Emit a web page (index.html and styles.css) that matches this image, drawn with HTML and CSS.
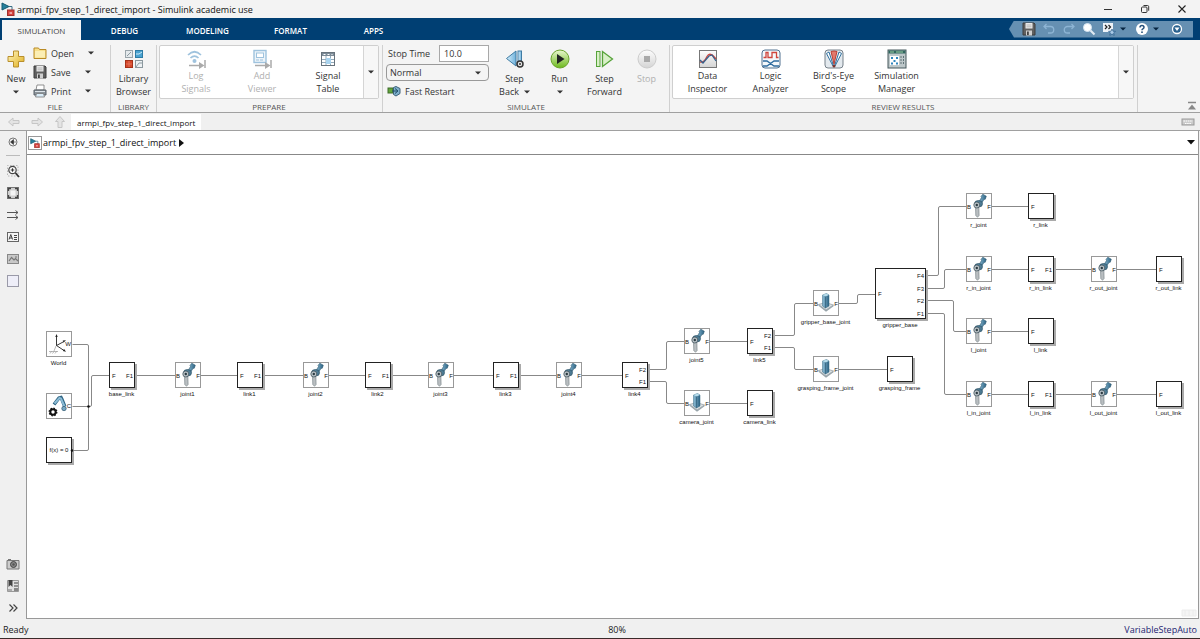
FILE: index.html
```html
<!DOCTYPE html>
<html lang="en">
<head>
<meta charset="utf-8">
<title>armpi_fpv_step_1_direct_import - Simulink academic use</title>
<link rel="stylesheet" href="styles.css">
</head>
<body>
<svg class="defs" aria-hidden="true">
  <defs>
    <linearGradient id="gold" x1="0" y1="0" x2="1" y2="1"><stop offset="0" stop-color="#fff7c0"/><stop offset="1" stop-color="#e0ae1c"/></linearGradient>
    <linearGradient id="green" x1="0" y1="0" x2="0" y2="1"><stop offset="0" stop-color="#eaf7cf"/><stop offset="1" stop-color="#6cb81c"/></linearGradient>
    <linearGradient id="blue" x1="0" y1="0" x2="1" y2="0"><stop offset="0" stop-color="#d8effb"/><stop offset="1" stop-color="#6fb2dc"/></linearGradient>
    <linearGradient id="steel" x1="0" y1="0" x2="1" y2="0"><stop offset="0" stop-color="#8dbdd6"/><stop offset="1" stop-color="#2b6283"/></linearGradient>
    <linearGradient id="grey" x1="0" y1="0" x2="0" y2="1"><stop offset="0" stop-color="#fdfdfd"/><stop offset="1" stop-color="#d4d4d4"/></linearGradient>
    <symbol id="i-model" viewBox="0 0 14 14"><path d="M1 1l7 3.500-7 3.500z" fill="#27809c" stroke="#155a70"/><path d="M8 4.500h3v4" fill="none" stroke="#3a6f86"/><rect x="6.500" y="8" width="6.500" height="5.500" fill="#d8433e" stroke="#a12f2b"/><path d="M8.500 11h2.500" stroke="#fff"/></symbol>
    <symbol id="i-floppy" viewBox="0 0 14 14"><path d="M1 1h11l1 1v11H1z" fill="#606060" stroke="#3d3d3d"/><rect x="3.500" y="1" width="7" height="5.500" fill="#e9e9e9"/><path d="M4.500 3h5M4.500 4.800h5" stroke="#a5a5a5" stroke-width=".7"/><rect x="4" y="8.500" width="6" height="5" fill="#cfcfcf"/><rect x="5" y="9.500" width="1.800" height="3.500" fill="#444"/></symbol>
    <symbol id="i-caret" viewBox="0 0 6 4"><path d="M0 .5h6L3 3.500z" fill="currentColor"/></symbol>
  </defs>
</svg>

<header class="titlebar">
  <svg class="i14"><use href="#i-model"/></svg>
  <h1 class="title">armpi_fpv_step_1_direct_import - Simulink academic use</h1>
  <div class="window-buttons">
    <button aria-label="Minimize"><svg class="i10" viewBox="0 0 10 10"><path d="M1 5.500h8" stroke="#333"/></svg></button>
    <button aria-label="Restore"><svg class="i10" viewBox="0 0 10 10" fill="none" stroke="#333"><rect x="1.500" y="3" width="5.500" height="5.500" rx="1"/><path d="M3.500 1.500h4q1.200 0 1.200 1.200v4"/></svg></button>
    <button aria-label="Close"><svg class="i10" viewBox="0 0 10 10"><path d="M1.500 1.500l7 7m0-7l-7 7" stroke="#222" stroke-width="1.100"/></svg></button>
  </div>
</header>

<nav class="tabstrip">
  <button class="tab active">SIMULATION</button>
  <button class="tab">DEBUG</button>
  <button class="tab">MODELING</button>
  <button class="tab">FORMAT</button>
  <button class="tab">APPS</button>
  <div class="quick">
    <button aria-label="Save"><svg class="i14"><use href="#i-floppy"/></svg></button>
    <button aria-label="Undo"><svg class="i14" viewBox="0 0 14 14"><path d="M4.500 2L2 4.500 4.500 7M2 4.500h6.500a3 3 0 010 6.500H6" fill="none" stroke="#8db4d4" stroke-width="1.300"/></svg></button>
    <button aria-label="Redo"><svg class="i14" viewBox="0 0 14 14"><path d="M9.500 2L12 4.500 9.500 7M12 4.500H5.500a3 3 0 000 6.500H8" fill="none" stroke="#8db4d4" stroke-width="1.300"/></svg></button>
    <button aria-label="Find"><svg class="i14" viewBox="0 0 14 14"><path d="M8.500 8.500l4 4" stroke="#dfeaf3" stroke-width="2.200"/><circle cx="5.500" cy="5.500" r="4" fill="#fff" stroke="#d7e6f2"/></svg></button>
    <button class="wide" aria-label="Favorites"><svg class="i14" viewBox="0 0 14 14"><rect x="1" y="1" width="10" height="9" fill="#eef3f8"/><path d="M3 3l2 2-2 2M6.500 3l2 2-2 2" fill="none" stroke="#222" stroke-width="1.200"/><path d="M10 7l1 2.200 2.500.2-1.900 1.500.6 2.400L10 12l-2.200 1.300.6-2.400-1.900-1.500 2.500-.2z" fill="#a9c9e6" stroke="#275a88" stroke-width=".7"/></svg><svg class="caret"><use href="#i-caret"/></svg></button>
    <button class="wide help" aria-label="Help"><svg class="i14" viewBox="0 0 14 14"><circle cx="7" cy="7" r="6" fill="#fff"/><path d="M5 5.500q0-2 2-2t2 1.800q0 1-1.100 1.600-.9.500-.9 1.300" fill="none" stroke="#28527c" stroke-width="1.500"/><circle cx="7" cy="10.200" r=".9" fill="#28527c"/></svg><svg class="caret"><use href="#i-caret"/></svg></button>
    <button aria-label="Toolstrip options"><svg class="i14" viewBox="0 0 14 14"><circle cx="7" cy="7" r="4.500" fill="#2a628f" stroke="#fff" stroke-width="1.300"/><path d="M4.500 5.500h5L7 9z" fill="#fff"/></svg></button>
  </div>
</nav>

<div class="ribbon">
  <section class="group file">
    <div class="group-body">
      <button class="tool new"><svg class="i20" viewBox="0 0 20 20"><path d="M7.500 2h5v5.500H18v5h-5.500V18h-5v-5.500H2v-5h5.500z" fill="url(#gold)" stroke="#b98f2c"/></svg><span>New</span><svg class="caret"><use href="#i-caret"/></svg></button>
      <div class="file-list">
        <button class="row-tool open"><svg class="i14" viewBox="0 0 14 14"><path d="M1 2h4.500l1 1.500H13V12.500H1z" fill="#f7df8b" stroke="#b98a24"/><path d="M2 5h10v6.500H2z" fill="#fbeeb4"/></svg><span>Open</span><svg class="caret"><use href="#i-caret"/></svg></button>
        <button class="row-tool"><svg class="i14"><use href="#i-floppy"/></svg><span>Save</span><svg class="caret"><use href="#i-caret"/></svg></button>
        <button class="row-tool"><svg class="i14" viewBox="0 0 14 14"><path d="M4 1h7v5H3z" fill="#fff" stroke="#777" stroke-width=".8"/><path d="M1 6h12v5H1z" fill="#8b949b" stroke="#596168"/><path d="M2 7.500h10" stroke="#dce3e8"/><path d="M3.500 9.500h7l1 3.500h-9z" fill="#d9ecf8" stroke="#777" stroke-width=".8"/></svg><span>Print</span><svg class="caret"><use href="#i-caret"/></svg></button>
      </div>
    </div>
    <h2 class="group-name">FILE</h2>
  </section>

  <section class="group library">
    <div class="group-body">
      <button class="tool"><svg class="i20" viewBox="0 0 20 20"><rect x="1.500" y="1.500" width="7" height="7" fill="#e4e9ec" stroke="#9aa5ab"/><path d="M3 7l4-4" stroke="#8b989f" fill="none"/><rect x="11.500" y="1.500" width="7" height="7" fill="#4aa3d1" stroke="#2d7ba4"/><path d="M12 5h3l3-2" stroke="#cfeaf7" fill="none"/><rect x="1.500" y="11.500" width="7" height="7" fill="#d6492c" stroke="#a43119"/><path d="M5 12v6M2 15h6" stroke="#e8826d" stroke-width=".7"/><rect x="11.500" y="11.500" width="7" height="7" fill="#edf1f3" stroke="#8c989e"/><path d="M12 18l3-4h3" stroke="#8b989f" fill="none"/></svg><span>Library</span><span>Browser</span></button>
    </div>
    <h2 class="group-name">LIBRARY</h2>
  </section>

  <section class="group prepare">
    <div class="group-body">
      <div class="gallery">
        <div class="gallery-items">
          <button class="tool" disabled><svg class="i20" viewBox="0 0 20 20"><g fill="none" stroke="#9fc3de" stroke-width="1.700"><path d="M2 6q6.500-6.500 13 0M4.500 9q4-4 8 0"/></g><circle cx="8.500" cy="12" r="2" fill="#9fc3de"/><path d="M3 16.500h11M19 11v8" stroke="#aaa" stroke-width="1.500"/><path d="M13 13l5.500 3.500L13 20z" fill="#aaa"/></svg><span>Log</span><span>Signals</span></button>
          <button class="tool" disabled><svg class="i20" viewBox="0 0 20 20"><rect x="2" y="1.500" width="12" height="12" fill="#edf4f9" stroke="#9fc3de" stroke-width="1.400"/><rect x="4.500" y="4" width="7" height="4.500" fill="#fff" stroke="#9fc3de"/><path d="M4 11h3m1 0h3" stroke="#9fc3de"/><path d="M3 16.500h11M19 11v8" stroke="#aaa" stroke-width="1.500"/><path d="M13 13l5.500 3.500L13 20z" fill="#aaa"/></svg><span>Add</span><span>Viewer</span></button>
          <button class="tool"><svg class="i20" viewBox="0 0 20 20"><rect x="3.500" y="3.500" width="13" height="13" fill="#fff" stroke="#68737c"/><path d="M4 4h12v3H4z" fill="#7c8b97"/><path d="M5.500 5.500h2m2 0h2m2 0h1" stroke="#fff"/><path d="M8 7v9M12.500 7v9M4 10.500h12M4 13.500h12" stroke="#93aaba"/><rect x="8" y="9" width="5" height="6" fill="#a9d4ef"/></svg><span>Signal</span><span>Table</span></button>
        </div>
        <button class="gallery-more" aria-label="More prepare tools"><svg class="caret"><use href="#i-caret"/></svg></button>
      </div>
    </div>
    <h2 class="group-name">PREPARE</h2>
  </section>

  <section class="group simulate">
    <div class="group-body">
      <div class="sim-form">
        <div class="stop-time"><label for="stop">Stop Time</label><input id="stop" type="text" value="10.0"></div>
        <div class="mode"><select aria-label="Simulation mode"><option>Normal</option></select><svg class="caret"><use href="#i-caret"/></svg></div>
        <button class="fast"><svg class="i14" viewBox="0 0 14 14"><rect x="1" y="4" width="5" height="5" fill="#63a63b" stroke="#3d6b2a"/><path d="M6.500 3.500L9 2.500l4 2v5l-4 2.500-2.500-1.500z" fill="#7fb0cd" stroke="#3c6178"/><path d="M5 7h5M8 4.500L11 7 8 9.500" fill="none" stroke="#1f4c66"/></svg><span>Fast Restart</span></button>
      </div>
      <button class="tool sim-tool"><svg class="i20" viewBox="0 0 20 20"><path d="M11 2v15L1.500 9.500z" fill="url(#blue)" stroke="#3e7ba3"/><rect x="13" y="2" width="3.500" height="15" fill="url(#blue)" stroke="#3e7ba3"/><circle cx="15" cy="15" r="3" fill="#e6e6e6" stroke="#333" stroke-width="1.500"/><circle cx="15" cy="15" r="1" fill="#333"/></svg><span>Step</span><span class="with-caret">Back <svg class="caret"><use href="#i-caret"/></svg></span></button>
      <button class="tool sim-tool"><svg class="i20" viewBox="0 0 20 20"><circle cx="10" cy="10" r="9" fill="url(#green)" stroke="#6ba32c"/><path d="M7 5l7.500 5L7 15z" fill="#222"/></svg><span>Run</span><span class="with-caret"><svg class="caret"><use href="#i-caret"/></svg></span></button>
      <button class="tool sim-tool"><svg class="i20" viewBox="0 0 20 20"><rect x="1.500" y="2.500" width="3.500" height="15" fill="#d9f0c8" stroke="#57a33a"/><path d="M7.500 2.500v15L17.500 10z" fill="#d9f0c8" stroke="#57a33a" stroke-width="1.300"/></svg><span>Step</span><span>Forward</span></button>
      <button class="tool stop-tool" disabled><svg class="i20" viewBox="0 0 20 20"><circle cx="10" cy="10" r="9" fill="url(#grey)" stroke="#ccc"/><rect x="7" y="7" width="6" height="6" fill="#a9a9a9"/></svg><span>Stop</span></button>
    </div>
    <h2 class="group-name">SIMULATE</h2>
  </section>

  <section class="group review">
    <div class="group-body">
      <div class="gallery">
        <div class="gallery-items">
          <button class="tool"><svg class="i20" viewBox="0 0 20 20"><rect x="1.500" y="1.500" width="17" height="17" fill="url(#grey)" stroke="#777"/><path d="M2 13q4 1 7-5.500Q12 2 18 10" fill="none" stroke="#d0453c" stroke-width="1.300"/><path d="M2 11l3 3L11 7l3-1 4 6" fill="none" stroke="#34618d" stroke-width="1.300"/></svg><span>Data</span><span>Inspector</span></button>
          <button class="tool"><svg class="i20" viewBox="0 0 20 20"><rect x="1" y="1" width="18" height="18" rx="3" fill="#f4f7fa" stroke="#50708f"/><path d="M2.500 8.500H5v-5h2v5h4v-5h4.500v5h2" fill="none" stroke="#d0453c" stroke-width="1.300"/><path d="M2 12h4l7 5h5M2 17h4l7-5h5" fill="none" stroke="#2d6b9f" stroke-width="1.300"/></svg><span>Logic</span><span>Analyzer</span></button>
          <button class="tool"><svg class="i20" viewBox="0 0 20 20"><rect x="1" y="1" width="18" height="18" rx="3" fill="#e3e9ee" stroke="#77818a"/><path d="M2.500 4.500L5 3l4.500 14H9z" fill="#fff" stroke="#2e709f"/><path d="M17.500 4.500L15 3l-4.500 14h.5z" fill="#fff" stroke="#2e709f"/><path d="M7 2.500q3-1 6 0L10 15z" fill="#e27a6d" stroke="#bb3f34"/><circle cx="10" cy="17" r="1.500" fill="#7a3530"/></svg><span>Bird's-Eye</span><span>Scope</span></button>
          <button class="tool"><svg class="i20" viewBox="0 0 20 20"><rect x="1" y="1" width="18" height="18" fill="#bdc7c9" stroke="#46585c"/><path d="M1.500 1.500h17v3h-17z" fill="#31675f"/><path d="M3 3h4m2 0h7" stroke="#9ed0a5"/><rect x="3" y="7" width="9" height="9" fill="#fff"/><path d="M4 8h2v2H4zM9 8h2v2H9zM6.500 11h2v2h-2zM4 13.500h2v2H4zM9 13.500h2v2H9z" fill="#2e85bd"/><path d="M14 7v9M16.500 7v9" stroke="#607377" stroke-dasharray="2 1"/></svg><span>Simulation</span><span>Manager</span></button>
        </div>
        <button class="gallery-more" aria-label="More review tools"><svg class="caret"><use href="#i-caret"/></svg></button>
      </div>
    </div>
    <h2 class="group-name">REVIEW RESULTS</h2>
  </section>
  <button class="collapse" aria-label="Collapse toolstrip"><svg class="i10" viewBox="0 0 10 10"><path d="M1 1.500h8" stroke="#888" stroke-width="1.500"/><path d="M5 3.500L9 8.500H1z" fill="#888"/></svg></button>
</div>

<div class="docbar">
  <button class="nav-arrow" aria-label="Back"><svg class="i14" viewBox="0 0 14 14"><path d="M1.500 7L6 3v2.500h6v3H6V11z" fill="#e4e4e4" stroke="#c6c6c6"/></svg></button>
  <button class="nav-arrow" aria-label="Forward"><svg class="i14" viewBox="0 0 14 14"><path d="M12.500 7L8 3v2.500H2v3h6V11z" fill="#e4e4e4" stroke="#c6c6c6"/></svg></button>
  <button class="nav-arrow" aria-label="Up"><svg class="i14" viewBox="0 0 14 14"><path d="M7 1.500L2.500 6.500h2.500v6h4v-6h2.500z" fill="#e4e4e4" stroke="#c6c6c6"/></svg></button>
  <button class="doc-tab">armpi_fpv_step_1_direct_import</button>
  <button class="keyboard" aria-label="Keyboard shortcuts"><svg class="i14" viewBox="0 0 14 14"><rect x="1" y="4" width="12" height="6" fill="#ccc" stroke="#999"/><path d="M2.500 6h9M4 8.500h6" stroke="#fff" stroke-dasharray="1.500 .7"/></svg></button>
</div>

<div class="workspace">
  <aside class="rail">
    <button class="hide" aria-label="Hide browser"><svg class="i14" viewBox="0 0 14 14"><circle cx="7" cy="7" r="4" fill="#f5f5f5" stroke="#777"/><path d="M4.500 7L7.500 4.500v5zM7 7h3" fill="#333" stroke="#333" stroke-width=".6"/></svg></button>
    <button aria-label="Zoom"><svg class="i14" viewBox="0 0 14 14"><path d="M1.500 11V1.500H12V12H1.500z" fill="none" stroke="#aaa" stroke-width=".8" stroke-dasharray="1.500 1.500"/><circle cx="6.500" cy="6" r="3.700" fill="#f3f3f3" stroke="#444" stroke-width="1.200"/><path d="M9.500 9l3.500 4" stroke="#333" stroke-width="1.800"/><path d="M4.800 6h3.400M6.500 4.300v3.400" stroke="#333"/></svg></button>
    <button aria-label="Fit to view"><svg class="i14" viewBox="0 0 14 14"><rect x="1.500" y="1.500" width="11" height="11" fill="#d0d0d0" stroke="#777"/><rect x="4.500" y="4.500" width="5" height="5" fill="#f4f4f4"/><path d="M2.500 5v-2.500h2.500M9 2.500h2.500v2.500M11.500 9v2.500h-2.500M5 11.500h-2.500v-2.500" fill="none" stroke="#444" stroke-width="1.300"/></svg></button>
    <button aria-label="Sample time display"><svg class="i14" viewBox="0 0 14 14"><path d="M1 4.500h11M1 9.500h11M9.500 2.500l2.500 2-2.500 2M9.500 7.500l2.500 2-2.500 2" fill="none" stroke="#555"/></svg></button>
    <button aria-label="Annotation"><svg class="i14" viewBox="0 0 14 14"><rect x="1.500" y="2.500" width="11" height="9" fill="#f5f5f5" stroke="#666"/><path d="M3 9.500l1.800-5 1.800 5M3.700 8h2.400M8 5.500h3M8 7.500h3M8 9.500h3" fill="none" stroke="#444"/></svg></button>
    <button aria-label="Image"><svg class="i14" viewBox="0 0 14 14"><rect x="1.500" y="2.500" width="11" height="9" fill="#c8c8c8" stroke="#888"/><path d="M3 9l2.500-3.500L8 8l1.500-1.500L12 9M9 5h2" fill="none" stroke="#777" stroke-width="1.200"/></svg></button>
    <button aria-label="Area"><svg class="i14" viewBox="0 0 14 14"><rect x="1.500" y="1.500" width="11" height="11" fill="#eeeef8" stroke="#9a9aa8"/></svg></button>
    <button class="lower" aria-label="Screenshot"><svg class="i14" viewBox="0 0 14 14"><path d="M1 3.500h12v8.500H1zM2 2.500h3" fill="#ccc" stroke="#777"/><circle cx="7.500" cy="7.500" r="3" fill="#888" stroke="#444"/><circle cx="7.500" cy="7.500" r="1.200" fill="#555"/></svg></button>
    <button aria-label="Bookmarks"><svg class="i14" viewBox="0 0 14 14"><path d="M1.500 1.500h11v11h-11z" fill="#e1e1e1" stroke="#999"/><path d="M2.500 1h4v7l-2-2-2 2z" fill="#444"/><path d="M8 4h4M8 7h4" stroke="#777" stroke-width="1.500"/><rect x="8" y="9" width="4" height="3" fill="#888"/><path d="M2 11h4" stroke="#777"/></svg></button>
    <button aria-label="More tools"><svg class="i14" viewBox="0 0 14 14"><path d="M3.500 3.500L7 7l-3.500 3.500M7.500 3.500L11 7l-3.500 3.500" fill="none" stroke="#444" stroke-width="1.200"/></svg></button>
  </aside>
  <main class="editor">
    <div class="crumbs">
      <svg class="i14 crumb-icon"><use href="#i-model"/></svg>
      <a href="#model">armpi_fpv_step_1_direct_import</a>
      <svg class="crumb-arrow" viewBox="0 0 5 8"><path d="M0 0l5 4-5 4z" fill="#111"/></svg>
      <button class="crumb-menu" aria-label="Model history"><svg viewBox="0 0 8 5"><path d="M0 0h8L4 4.500z" fill="#111"/></svg></button>
    </div>
    <div class="canvas" id="model">
      <svg class="diagram" id="diagram" width="1171" height="463" viewBox="27 155 1171 463">
        <defs>
          <symbol id="b-revolute" viewBox="0 0 25 25" overflow="visible">
            <path d="M12.500 9.500L15.500 4.500l-.5-1 1.800-2.300 3.500 2-1 3-1.300.2-3.500 5.500z" fill="url(#steel)" stroke="#315a70" stroke-width=".6"/>
            <path d="M9.500 14.500h3.400l.2 8-1.600 1.800L9.800 22.500z" fill="#b9bec1" stroke="#6f7a80" stroke-width=".6"/>
            <ellipse cx="12.500" cy="10.800" rx="4" ry="3.300" fill="#4d7c95" stroke="#2c5265" stroke-width=".7"/>
            <circle cx="10.800" cy="12" r="3" fill="#b9c2c7" stroke="#44555e" stroke-width=".8"/>
            <circle cx="10.800" cy="12" r="1.200" fill="#2c3b42"/>
          </symbol>
          <symbol id="b-prismatic" viewBox="0 0 25 25">
            <path d="M5.500 14.500l7-2 8 2.500-7.500 5z" fill="#dde2e5" stroke="#7b868c" stroke-width=".6"/>
            <path d="M5.500 14.500L13 20l7.500-5v1.200L13 21.800l-7.500-6z" fill="#98a4aa"/>
            <path d="M9.500 5l4-1.500L16 5v11l-3.500 2-3-2z" fill="url(#steel)" stroke="#356882" stroke-width=".5"/>
            <path d="M9.500 5l4-1.500L16 5l-3.500 1.500z" fill="#b7dceb"/>
            <path d="M12.500 6.500V18" stroke="#26566f" stroke-width=".6"/>
          </symbol>
          <symbol id="b-world" viewBox="0 0 25 25">
            <path d="M10.500 14.500V5M10.500 14.500l7.500-4M10.500 14.500l7.500 5" fill="none" stroke="#222" stroke-width=".9"/>
            <path d="M10.500 3l1.200 3H9.300zM20 9.200l-2.300 2.400-1-2zM20 20.700l-3.200-.6 1.300-2z" fill="#222"/>
            <path d="M10 15l-2 5M3 20.500h9M4 22.500l1.500-2M6.500 22.500l1.500-2M9 22.500l1.500-2" fill="none" stroke="#888" stroke-width=".6"/>
          </symbol>
          <symbol id="b-mechanism" viewBox="0 0 25 25">
            <path d="M8 11.500l5-6.500 2-.5 1 2 2.800 7" fill="none" stroke="#2f6583" stroke-width="3.400"/>
            <path d="M8.500 10.500l5-5.500 1.500.5 3.500 8" fill="none" stroke="#8cbcd6" stroke-width="2"/>
            <circle cx="18" cy="15.500" r="2.200" fill="#79a9c4" stroke="#2c566e" stroke-width=".7"/>
            <circle cx="7" cy="19" r="2.700" fill="none" stroke="#111" stroke-width="2"/>
            <circle cx="7" cy="19" r="3.800" fill="none" stroke="#111" stroke-width="1.300" stroke-dasharray="1.500 1.485"/>
          </symbol>
        </defs>
      </svg>
      <svg class="watermark" viewBox="0 0 16 8"><path d="M1 1h14v6H1zM4 1v6M8 1v6M12 1v6" fill="#f5f5f5" stroke="#ececec"/></svg>
    </div>
  </main>
</div>

<footer class="status">
  <span>Ready</span><span class="zoom-level">80%</span><a href="#model" class="solver">VariableStepAuto</a>
</footer>
<script src="script.js"></script>
</body>
</html>
```
FILE: styles.css
```css
* { box-sizing: border-box; }
html, body { margin: 0; }
body {
  display: flex;
  flex-direction: column;
  min-height: 100vh;
  font: 9px/13px "Open Sans", "Noto Sans", sans-serif;
  color: #333;
  background: #f0f0f0;
}
button {
  font: inherit;
  color: inherit;
  margin: 0;
  padding: 0;
  border: 0;
  background: none;
  white-space: nowrap;
}
h1, h2 { margin: 0; font: inherit; }
svg { display: block; flex: none; }
.defs { position: absolute; width: 0; height: 0; }
.i10 { width: 10px; height: 10px; }
.i14 { width: 14px; height: 14px; }
.i20 { width: 20px; height: 20px; }
.caret { width: 6px; height: 4px; }

.titlebar {
  display: flex;
  align-items: center;
  gap: 2px;
  height: 18px;
  padding-left: 1px;
  background: #f3f3f3;
}
.title { color: #111; }
.window-buttons { display: flex; margin-left: auto; }
.window-buttons button { display: grid; place-items: center; width: 37px; height: 18px; }

.tabstrip {
  display: flex;
  align-items: flex-end;
  height: 22px;
  padding: 0 7px 0 0;
  background: #003f73;
  color: #fff;
}
.tab { width: 83px; height: 20px; font-size: 8px; font-weight: 600; }
.tab.active {
  width: 79px;
  margin: 0 2px;
  background: #f5f5f5;
  color: #444;
  font-weight: 400;
}
.quick {
  display: flex;
  align-items: center;
  align-self: center;
  gap: 6px;
  height: 17px;
  margin-left: auto;
  padding: 0 9px 0 13px;
  background: #6690b2;
  clip-path: polygon(0 50%, 5px 0, 100% 0, 100% 100%, 5px 100%);
}
.quick .wide { display: flex; align-items: center; gap: 4px; color: #062440; }
.quick .help { margin: 0 5px 0 3px; }

.ribbon {
  display: flex;
  height: 73px;
  background: #f4f4f4;
  border-bottom: 1px solid #a0a0a0;
}
.group {
  display: flex;
  flex-direction: column;
  margin-top: 5px;
  border-right: 1px solid #d0d0d0;
}
.group-body { display: flex; flex: 1; }
.group-name { font-size: 8px; line-height: 11px; text-align: center; color: #555; }
.tool { display: flex; flex-direction: column; align-items: center; padding-top: 4px; }
.tool svg + span { margin-top: 3px; }
.tool:disabled { color: #b0b0b0; }
.file { width: 111px; }
.library { width: 46px; }
.library .tool { width: 100%; }
.new { width: 32px; }
.new .caret { margin-top: 5px; }
.file-list { display: flex; flex-direction: column; gap: 5px; padding: 1px 0 0 1px; }
.row-tool { display: flex; align-items: center; gap: 4px; height: 14px; }
.row-tool span { width: 30px; text-align: left; }
.row-tool.open span { width: 33px; }
.prepare { width: 226px; padding: 0 3px 0 2px; }
.review { width: 468px; padding: 0 3px 0 2px; }
.gallery {
  display: flex;
  flex: 1;
  height: 54px;
  background: #fff;
  border: 1px solid #cfcfcf;
  border-radius: 2px;
}
.gallery-items { display: flex; flex: 1; padding-left: 3px; }
.gallery .tool { width: 66px; padding-top: 3px; }
.gallery .tool svg + span { margin-top: 0; }
.review .gallery .tool { width: 63px; }
.gallery-more {
  display: grid;
  place-items: center;
  width: 15px;
  background: #f7f7f7;
  border-left: 1px solid #d5d5d5;
}
.simulate { width: 287px; }
.sim-form { width: 109px; padding-left: 3px; }
.stop-time { display: flex; align-items: center; justify-content: space-between; height: 17px; padding: 0 3px 0 2px; }
.stop-time input {
  width: 50px;
  height: 17px;
  padding: 0 4px;
  border: 1px solid #a8a8a8;
  background: #fff;
  font: inherit;
  color: inherit;
}
.mode { display: grid; align-items: center; width: 103px; margin-top: 2px; }
.mode select, .mode .caret { grid-area: 1 / 1; }
.mode .caret { justify-self: end; margin-right: 8px; pointer-events: none; }
.mode select {
  appearance: none;
  width: 100%;
  height: 17px;
  padding: 0 3px;
  border: 1px solid #999;
  border-radius: 4px;
  background: #f4f4f4;
  font: inherit;
  color: inherit;
}
.fast { display: flex; align-items: center; gap: 4px; margin: 3px 0 0 1px; }
.sim-tool { width: 45px; }
.with-caret { display: flex; align-items: center; gap: 5px; height: 13px; }
.stop-tool { width: 39px; }
.collapse { align-self: flex-end; margin: 0 3px 1px auto; }

.docbar {
  display: flex;
  align-items: center;
  height: 18px;
  padding: 0 5px 0 2px;
  border-bottom: 1px solid #a0a0a0;
}
.nav-arrow { display: grid; place-items: center; width: 23px; }
.doc-tab {
  align-self: stretch;
  margin-top: 1px;
  padding: 0 6px;
  background: #fff;
  color: #111;
  font-size: 8px;
}
.keyboard { margin-left: auto; }

.workspace { display: flex; flex: 1; }
.rail {
  display: flex;
  flex-direction: column;
  align-items: center;
  gap: 8px;
  width: 26px;
  padding-bottom: 4px;
}
.rail .hide { width: 14px; height: 25px; border-bottom: 1px solid #bbb; padding: 4px 0 7px; }
.rail .lower { margin-top: auto; }
.editor {
  display: flex;
  flex: 1;
  flex-direction: column;
  min-width: 0;
  margin-right: 1px;
  border: 1px solid #999;
  border-top: 0;
  background: #fff;
}
.crumbs {
  display: flex;
  align-items: center;
  gap: 1px;
  height: 24px;
  padding: 0 3px 0 1px;
  border-bottom: 1px solid #888;
}
.crumbs a { color: #111; text-decoration: none; }
.crumb-icon { padding: 1px; border: 1px solid #999; }
.crumb-arrow { width: 5px; height: 8px; margin-left: 2px; }
.crumb-menu { margin-left: auto; }
.crumb-menu svg { width: 8px; height: 5px; }
.canvas { position: relative; flex: 1; overflow: hidden; }
.watermark { position: absolute; right: 1px; bottom: 1px; width: 16px; height: 8px; }

.diagram { font: 6px "Liberation Sans", Arial, sans-serif; fill: #111; }
.block-sub { fill: #fff; stroke: #222; }
.block-joint { fill: #fff; stroke: #999; }
.block-shadow { fill: #aaa; }
.wire { fill: none; stroke: #888; }
.label { text-anchor: middle; }
.port-out { text-anchor: end; }

.status {
  display: flex;
  align-items: center;
  justify-content: space-between;
  height: 20px;
  padding: 2px 3px 0;
  border-bottom: 1px solid #3a2a2a;
  color: #222;
}
.status span, .status a { flex: 1; }
.status .zoom-level { text-align: center; padding-left: 34px; }
.status .solver { text-align: right; color: #1c1c70; text-decoration: none; }
```
FILE: script.js
```js
const NS = "http://www.w3.org/2000/svg";
const diagram = document.getElementById("diagram");

function add(parent, tag, attrs, text) {
  const el = document.createElementNS(NS, tag);
  for (const key in attrs) el.setAttribute(key, attrs[key]);
  if (text) el.textContent = text;
  parent.appendChild(el);
  return el;
}

// Wires: point lists, corners are rounded when drawn
const wires = [
  [[72, 344], [88, 344], [88, 450], [72, 450]],
  [[72, 406], [91, 406], [91, 375], [109, 375]],
  [[134, 375], [622, 375]],
  [[647, 369], [666, 369], [666, 341], [685, 341]],
  [[647, 381], [666, 381], [666, 403], [685, 403]],
  [[709, 341], [747, 341]], [[709, 403], [747, 403]],
  [[772, 335], [794, 335], [794, 303], [813, 303]],
  [[772, 347], [794, 347], [794, 369], [813, 369]],
  [[838, 303], [857, 303], [857, 294], [875, 294]],
  [[838, 369], [888, 369]],
  [[925, 275], [938, 275], [938, 206], [966, 206]],
  [[925, 288], [944, 288], [944, 269], [966, 269]],
  [[925, 300], [953, 300], [953, 331], [966, 331]],
  [[925, 313], [944, 313], [944, 394], [966, 394]],
  [[991, 206], [1028, 206]], [[991, 331], [1028, 331]],
  [[991, 269], [1156, 269]], [[991, 394], [1156, 394]]
];

// Blocks: kind, left, top, name, output ports [text, y offset]
const blocks = [
  ["world", 46, 331, "World"],
  ["mechanism", 46, 393, ""],
  ["solver", 46, 437, ""],
  ["link", 109, 362, "base_link", [["F1", 13]]],
  ["revolute", 175, 362, "joint1"],
  ["link", 237, 362, "link1", [["F1", 13]]],
  ["revolute", 303, 362, "joint2"],
  ["link", 365, 362, "link2", [["F1", 13]]],
  ["revolute", 428, 362, "joint3"],
  ["link", 493, 362, "link3", [["F1", 13]]],
  ["revolute", 556, 362, "joint4"],
  ["link", 622, 362, "link4", [["F2", 7], ["F1", 19]]],
  ["revolute", 684, 328, "joint5"],
  ["link", 747, 328, "link5", [["F2", 7], ["F1", 19]]],
  ["prismatic", 684, 390, "camera_joint"],
  ["link", 747, 390, "camera_link"],
  ["prismatic", 813, 290, "gripper_base_joint"],
  ["prismatic", 813, 356, "grasping_frame_joint"],
  ["link", 887, 356, "grasping_frame"],
  ["link", 875, 268, "gripper_base", [["F4", 7], ["F3", 20], ["F2", 32], ["F1", 45]], 50],
  ["revolute", 966, 193, "r_joint"],
  ["link", 1028, 193, "r_link"],
  ["revolute", 966, 256, "r_in_joint"],
  ["link", 1028, 256, "r_in_link", [["F1", 13]]],
  ["revolute", 1091, 256, "r_out_joint"],
  ["link", 1156, 256, "r_out_link"],
  ["revolute", 966, 318, "l_joint"],
  ["link", 1028, 318, "l_link"],
  ["revolute", 966, 381, "l_in_joint"],
  ["link", 1028, 381, "l_in_link", [["F1", 13]]],
  ["revolute", 1091, 381, "l_out_joint"],
  ["link", 1156, 381, "l_out_link"]
];

function wirePath(points) {
  let d = "M" + points[0].map(n => n + 0.5).join(" ");
  for (let i = 1; i < points.length; i++) {
    const [x, y] = points[i];
    const next = points[i + 1];
    if (!next) { d += `L${x + 0.5} ${y + 0.5}`; continue; }
    const [px, py] = points[i - 1];
    const r = 1.5;
    const ax = x + 0.5 - Math.sign(x - px) * r, ay = y + 0.5 - Math.sign(y - py) * r;
    const bx = x + 0.5 + Math.sign(next[0] - x) * r, by = y + 0.5 + Math.sign(next[1] - y) * r;
    d += `L${ax} ${ay}Q${x + 0.5} ${y + 0.5} ${bx} ${by}`;
  }
  return d;
}

wires.forEach(points => add(diagram, "path", { class: "wire", d: wirePath(points) }));
add(diagram, "circle", { cx: 88.5, cy: 406.5, r: 1.3 });

blocks.forEach(([kind, x, y, name, ports = [], size = 25]) => {
  const g = add(diagram, "g", { transform: `translate(${x} ${y})` });
  const solid = kind === "link" || kind === "solver";
  if (solid) add(g, "rect", { class: "block-shadow", x: 2, y: 2, width: size + 1, height: size + 1 });
  add(g, "rect", { class: solid ? "block-sub" : "block-joint", x: 0.5, y: 0.5, width: size, height: size });
  if (!solid) add(g, "use", { href: "#b-" + kind, width: 25, height: 25 });
  const mid = Math.round(size / 2) + 2;
  if (kind === "solver") {
    add(g, "text", { class: "label", x: 13, y: 15 }, "f(x) = 0");
    add(g, "circle", { cx: 26, cy: 13.5, r: 1.3 });
  } else if (kind === "world") {
    add(g, "text", { class: "port-out", x: 25, y: 15 }, "W");
  } else if (kind === "mechanism") {
    add(g, "text", { class: "port-out", x: 25, y: 15 }, "C");
  } else if (kind === "link") {
    add(g, "text", { x: 3, y: mid + 1 }, "F");
    ports.forEach(([text, py]) => add(g, "text", { class: "port-out", x: size - 1, y: py + 3 }, text));
  } else {
    add(g, "text", { x: 1, y: mid + 1 }, "B");
    add(g, "text", { class: "port-out", x: 25, y: mid + 1 }, "F");
  }
  if (name) add(g, "text", { class: "label", x: size / 2, y: size + 9 }, name);
});
```
